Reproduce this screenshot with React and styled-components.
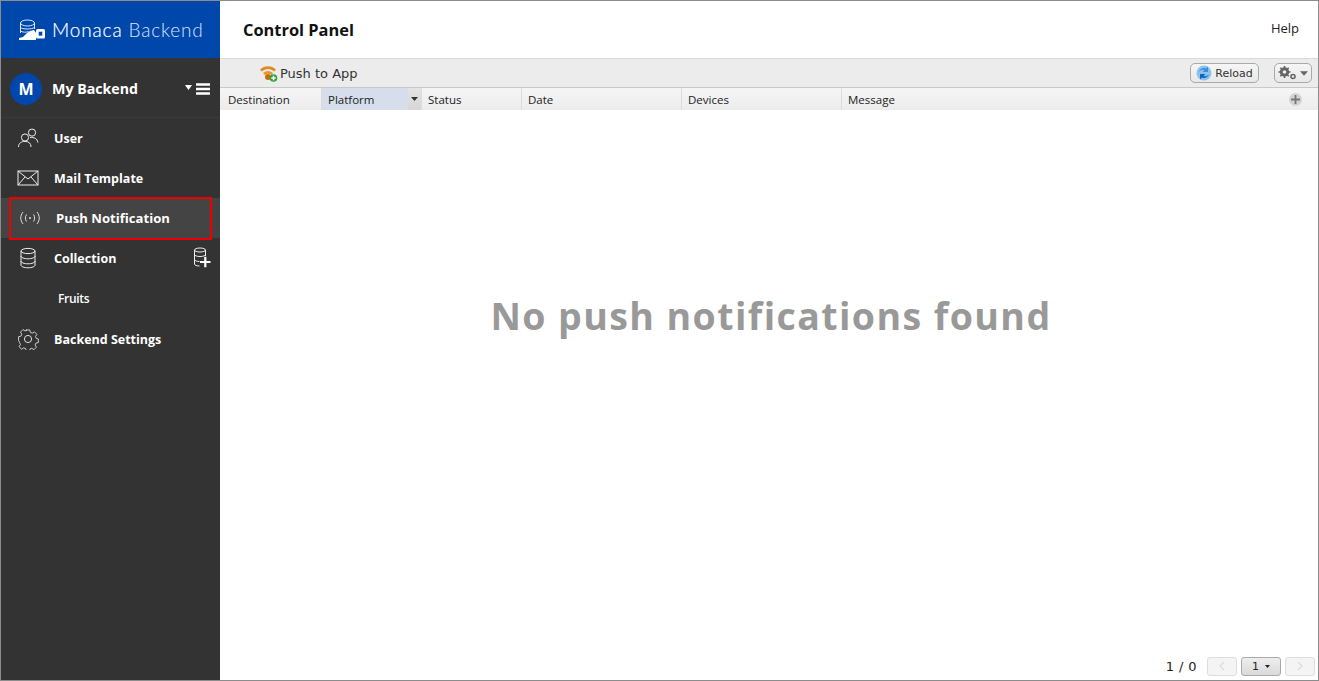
import React from 'react';
import styled, { createGlobalStyle } from 'styled-components';

const Global = createGlobalStyle`
  html, body { margin: 0; padding: 0; background: #fff; }
  body { font-family: "Open Sans", "DejaVu Sans", sans-serif; }
  * { box-sizing: border-box; }
`;
const Frame = styled.div`
  width: 1319px; height: 681px; display: flex; overflow: hidden;
  border: 1px solid #8c8c8c; background: #fff;
`;
const Sidebar = styled.aside`
  width: 219px; flex: none; background: #333; display: flex; flex-direction: column; color: #fff;
`;
const Brand = styled.div`
  height: 57px; background: #0047ac; display: flex; align-items: center; padding-left: 17px; gap: 6px;
`;
const BrandText = styled.div`
  font: 300 19px "Lato", sans-serif; letter-spacing: 0.85px; color: #fff; white-space: nowrap;
  -webkit-text-stroke: 0.2px #fff;
  span { color: #dbe5f5; -webkit-text-stroke: 0; }
`;
const Project = styled.div`
  height: 60px; display: flex; align-items: center; padding: 2px 9px 0; border-bottom: 1px solid #3a3a3a;
`;
const Avatar = styled.div`
  width: 32px; height: 32px; border-radius: 50%; background: #0047ac; display: flex; align-items: center;
  justify-content: center; font: 700 16px "Open Sans", sans-serif; margin-right: 10px;
`;
const ProjectName = styled.div`
  font: 700 14.2px "Open Sans", sans-serif; flex: 1; white-space: nowrap;
`;
const Nav = styled.nav`display: flex; flex-direction: column;`;
const Item = styled.div`
  height: 40px; display: flex; align-items: center; position: relative;
  padding-left: ${p => p.$active ? 18 : 16}px;
  background: ${p => p.$active ? '#444' : 'transparent'};
  font: 700 ${p => p.$active ? 13.1 : 12.5}px "Open Sans", sans-serif; color: #fff; white-space: nowrap;
  margin-top: ${p => p.$tight ? 1 : 0}px;
  ${p => p.$active && `
    &::after {
      content: ""; position: absolute; left: 8px; right: 8px; top: -1px; bottom: -2px;
      border: 2px solid #ee0000;
    }
  `}
`;
const IconSlot = styled.span`
  width: 22px; height: 22px; display: flex; align-items: center; justify-content: center; margin-right: 15px; flex: none;
`;
const SubItem = styled.div`
  height: 40px; display: flex; align-items: center; padding-left: 57px; font: 600 12px "Open Sans", sans-serif; letter-spacing: -0.3px;
`;
const AddWrap = styled.span`position: absolute; right: 9px; top: 9px; display: flex;`;
const Main = styled.main`flex: 1; display: flex; flex-direction: column; min-width: 0;`;
const TopBar = styled.header`
  height: 58px; flex: none; display: flex; align-items: center; justify-content: space-between; padding: 0 19px 0 23px;
  border-bottom: 1px solid #d9d9d9;
`;
const Title = styled.h1`margin: 0; font: 700 16.4px "Open Sans", sans-serif; color: #111;`;
const Help = styled.a`font: 400 13px "Open Sans", sans-serif; color: #222; margin-top: -4px;`;
const Toolbar = styled.div`
  height: 29px; flex: none; background: #ececec; border-bottom: 1px solid #c9c9c9; display: flex; align-items: center; padding: 0 6px 0 40px;
`;
const PushBtn = styled.div`
  display: flex; align-items: center; gap: 2px; font: 400 13px "DejaVu Sans", sans-serif; color: #333; flex: 1;
`;
const Btn = styled.div`
  height: 20px; display: flex; align-items: center; justify-content: center; border: 1px solid #a9a9a9; border-radius: 5px;
  background: linear-gradient(#f6f6f6, #e8e8e8); font: 400 11px "DejaVu Sans", sans-serif; color: #333;
  width: ${p => p.$w}px; margin-left: ${p => p.$ml || 0}px; gap: 3px;
`;
const HeadRow = styled.div`
  height: 22px; flex: none; display: flex; background: linear-gradient(#f5f5f5, #ececec); position: relative;
`;
const Col = styled.div`
  width: ${p => p.$w}px; flex: ${p => p.$grow ? 1 : 'none'}; display: flex; align-items: center; padding-left: ${p => p.$first ? 8 : 6}px;
  border-right: ${p => p.$grow ? 0 : '1px solid #dcdcdc'}; font: 400 11.5px "Open Sans", sans-serif; color: #222;
  position: relative; background: ${p => p.$sel ? '#d5deea' : 'transparent'};
`;
const SortBtn = styled.span`
  position: absolute; right: 0; top: 0; bottom: 0; width: 13px; background: linear-gradient(#e4e4e4, #d6d6d6); display: flex; align-items: center; justify-content: center;
`;
const Plus = styled.span`
  position: absolute; right: 16px; top: 5px; width: 13px; height: 13px; border-radius: 50%; background: #d3d3d3;
  display: flex; align-items: center; justify-content: center;
`;
const Empty = styled.div`
  flex: 1; display: flex; align-items: center; justify-content: center; padding: 0 0 136px 4px;
  font: 700 37.5px "Open Sans", "DejaVu Sans", sans-serif; color: #999; letter-spacing: 1.41px;
`;
const Pager = styled.div`
  height: 24px; flex: none; display: flex; align-items: center; justify-content: flex-end; padding: 0 3px 4px 0; gap: 3px;
`;
const PageLabel = styled.span`font: 400 13px "DejaVu Sans", sans-serif; color: #222; margin-right: 7px; letter-spacing: 0.4px;`;
const PageBtn = styled.div`
  height: 19px; width: ${p => p.$w}px; border: 1px solid ${p => p.$on ? '#aaa' : '#ddd'}; border-radius: 3px; margin: 0 ${p => p.$mx || 0}px;
  background: ${p => p.$on ? 'linear-gradient(#eee,#d9d9d9)' : '#f4f4f4'}; display: flex; align-items: center; justify-content: center; gap: 6px;
  font: 400 11px "DejaVu Sans", sans-serif; color: #222;
`;

const Stroke = { fill: 'none', stroke: '#eee', strokeWidth: 1 };
const Db = ({ s = 20 }) => (
  <svg width={s} height={s * 1.1} viewBox="0 0 20 22" {...Stroke}>
    <ellipse cx="10" cy="4" rx="7" ry="2.6" />
    <path d="M3 4v14c0 1.6 3 2.8 7 2.8s7-1.2 7-2.8V4M3 9c0 1.6 3 2.8 7 2.8s7-1.2 7-2.8M3 14c0 1.6 3 2.8 7 2.8s7-1.2 7-2.8" />
  </svg>
);
const Caret = ({ c = '#333', w = 7, h = 4 }) => (
  <svg width={w} height={h} viewBox="0 0 7 4"><path d="M0 0h7L3.5 4z" fill={c} /></svg>
);

export default function App() {
  return (
    <>
      <Global />
      <Frame>
        <Sidebar>
          <Brand>
            <svg width="28" height="24" viewBox="0 0 28 24">
              <ellipse cx="9.500" cy="5" rx="7" ry="3" fill="none" stroke="#dfe8f5" />
              <path d="M2.500 5v10M16.500 5v6" stroke="#dfe8f5" fill="none" />
              <path d="M2.500 9.500c2 2 11 2 14 0M2.500 13c2 1.500 6 1.500 8 .5" stroke="#dfe8f5" fill="none" />
              <path d="M1 22v-2l4-1 4-4 3-2 4-1 2 3v7z" fill="#fff" />
              <rect x="18" y="11" width="9" height="9.500" rx="1.500" fill="#fff" />
              <rect x="20.700" y="13.700" width="3.600" height="4" fill="#0047ac" />
            </svg>
            <BrandText>Monaca <span>Backend</span></BrandText>
          </Brand>
          <Project>
            <Avatar>M</Avatar>
            <ProjectName>My Backend</ProjectName>
            <svg width="26" height="14" viewBox="0 0 26 14">
              <path d="M0 3h7L3.5 8z" fill="#fff" />
              <path d="M11 2.5h14M11 7h14M11 11.5h14" stroke="#fff" strokeWidth="2.4" />
            </svg>
          </Project>
          <Nav>
            <Item>
              <IconSlot>
                <svg width="22" height="20" viewBox="0 0 22 20" {...Stroke}>
                  <circle cx="8" cy="9.5" r="3.6" />
                  <path d="M1.5 19c0-3.6 2.6-5.6 6.5-5.6s6 2 6 5.6" />
                  <circle cx="15" cy="4.6" r="3.6" />
                  <path d="M13 9.6c4 -.6 7.5 1 7.8 5" />
                </svg>
              </IconSlot>
              User
            </Item>
            <Item>
              <IconSlot>
                <svg width="22" height="16" viewBox="0 0 22 16" {...Stroke}>
                  <rect x="1" y="1" width="20" height="14" />
                  <path d="M1 1l10 8 10-8M1 15l7-8M21 15l-7-8" />
                </svg>
              </IconSlot>
              Mail Template
            </Item>
            <Item $active>
              <IconSlot>
                <svg width="22" height="14" viewBox="0 0 22 14" fill="none" stroke="#ddd" strokeWidth="1">
                  <path d="M4 1C1 5 1 9 4 13M7.5 3.5C6 6 6 8 7.5 10.5M18 1c3 4 3 8 0 12M14.5 3.5c1.500 2.500 1.500 4.500 0 7" />
                  <circle cx="11" cy="7" r="1" fill="#ddd" stroke="none" />
                </svg>
              </IconSlot>
              Push Notification
            </Item>
            <Item>
              <IconSlot><Db /></IconSlot>
              Collection
              <AddWrap>
                <svg width="18" height="21" viewBox="0 0 18 21" {...Stroke}>
                  <ellipse cx="7" cy="3" rx="5.500" ry="2" />
                  <path d="M1.500 3v14c0 1 2 2 5 2M12.500 3v6M1.500 7.500c0 1 2 2 5.500 2s5.500-1 5.500-2M1.500 12.500c0 1 2 2 5 2" />
                  <path d="M7 15h10.500M12.300 9.800v10.500" strokeWidth="2.200" stroke="#fff" />
                </svg>
              </AddWrap>
            </Item>
            <SubItem>Fruits</SubItem>
            <Item $tight>
              <IconSlot>
                <svg width="22" height="22" viewBox="0 0 22 22" fill="none" stroke="#ddd" strokeWidth="1">
                  <circle cx="11" cy="11" r="3.600" />
                  <path d="M9 1.500h4l.6 2.700 2.200.9 2.300-1.500 2.800 2.800-1.500 2.300.9 2.200 2.200.6v4l-2.700.6-.9 2.200 1.500 2.300-2.800 2.800-2.300-1.500-2.200.9-.6 2.200H9l-.6-2.700-2.200-.9-2.300 1.500-2.800-2.800 1.500-2.300-.9-2.200L.5 13v-4l2.700-.6.9-2.200-1.500-2.300 2.800-2.800 2.300 1.500 2.200-.9z" transform="translate(1.100 .6) scale(.9)" />
                </svg>
              </IconSlot>
              Backend Settings
            </Item>
          </Nav>
        </Sidebar>
        <Main>
          <TopBar>
            <Title>Control Panel</Title>
            <Help>Help</Help>
          </TopBar>
          <Toolbar>
            <PushBtn>
              <svg width="18" height="17" viewBox="0 0 18 17">
                <path d="M0 4.500c4-4.500 12-4.500 16 0l-1.800 2C10.500 3 5.500 3 1.800 6.500z" fill="#e08a20" />
                <path d="M3 8c3-2.800 7-2.800 10 0l-1.700 2c-2-1.800-4.600-1.800-6.600 0z" fill="#e8952a" />
                <circle cx="8" cy="12" r="3" fill="#c46f10" />
                <circle cx="13.500" cy="13" r="3.800" fill="#2fa33a" />
                <path d="M11.300 13h4.400M13.500 10.800v4.400" stroke="#fff" strokeWidth="1.400" />
              </svg>
              Push to App
            </PushBtn>
            <Btn $w={69}>
              <svg width="16" height="16" viewBox="0 0 16 16">
                <circle cx="8" cy="8" r="7.500" fill="#8cc2ee" />
                <path d="M3 7c.6-3 4-5 7-3.500L12 1.500V7H6.500l2-2C6.500 4.200 4.500 5 3 7z" fill="#3f8fd8" />
                <path d="M13 9c-.6 3-4 5-7 3.500L4 14.500V9h5.500l-2 2c2 .8 4 0 5.500-2z" fill="#0f63bd" />
              </svg>
              Reload
            </Btn>
            <Btn $w={38} $ml={15}>
              <svg width="19" height="14" viewBox="0 0 19 14">
                <circle cx="6.500" cy="6" r="3.400" fill="none" stroke="#666" strokeWidth="2.600" />
                <path d="M6.500 0v12M.5 6h12M2.300 1.800l8.400 8.400M10.700 1.800l-8.400 8.400" stroke="#666" strokeWidth="1.600" />
                <circle cx="6.500" cy="6" r="1.800" fill="#eee" />
                <circle cx="15" cy="10.500" r="2" fill="none" stroke="#666" strokeWidth="1.600" />
              </svg>
              <Caret c="#666" w={8} h={5} />
            </Btn>
          </Toolbar>
          <HeadRow>
            <Col $w={102} $first>Destination</Col>
            <Col $w={100} $sel>Platform<SortBtn><Caret /></SortBtn></Col>
            <Col $w={100}>Status</Col>
            <Col $w={160}>Date</Col>
            <Col $w={160}>Devices</Col>
            <Col $grow>Message</Col>
            <Plus>
              <svg width="9" height="9" viewBox="0 0 9 9"><path d="M4.500 0v9M0 4.500h9" stroke="#777" strokeWidth="1.800" /></svg>
            </Plus>
          </HeadRow>
          <Empty>No push notifications found</Empty>
          <Pager>
            <PageLabel>1 / 0</PageLabel>
            <PageBtn $w={30}>
              <svg width="6" height="10" viewBox="0 0 6 10" fill="none" stroke="#ddd" strokeWidth="1.300"><path d="M5 1L1 5l4 4" /></svg>
            </PageBtn>
            <PageBtn $w={40} $on $mx={1}>1 <Caret c="#222" w={5} h={3} /></PageBtn>
            <PageBtn $w={30}>
              <svg width="6" height="10" viewBox="0 0 6 10" fill="none" stroke="#ddd" strokeWidth="1.300"><path d="M1 1l4 4-4 4" /></svg>
            </PageBtn>
          </Pager>
        </Main>
      </Frame>
    </>
  );
}
